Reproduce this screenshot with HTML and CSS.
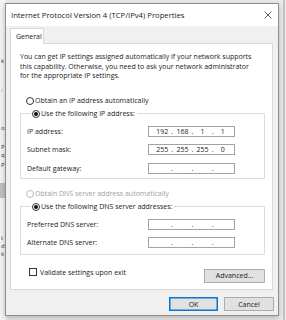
FILE: index.html
```html
<!DOCTYPE html>
<html lang="en">
<head>
    <meta charset="UTF-8">
    <meta name="viewport" content="width=device-width, initial-scale=1.0">
    <title>Internet Protocol Version 4 (TCP/IPv4) Properties</title>
    <link rel="stylesheet" href="styles.css">
</head>
<body>

<div class="desktop">
    <!-- window behind the dialog, only a thin strip shows -->
    <div class="back-window">
        <div class="back-line">k</div>
        <div class="back-line gap-21">:</div>
        <div class="back-line gap-30">o</div>
        <div class="back-line gap-11">P</div>
        <div class="back-line">q</div>
        <div class="back-line gap-2">P</div>
        <div class="back-bar"></div>
        <div class="back-line gap-36">t</div>
        <div class="back-line">d</div>
        <div class="back-line">k</div>
    </div>
    <div class="back-edge"></div>

    <div class="dialog">
        <div class="titlebar">
            <span class="title">Internet Protocol Version 4 (TCP/IPv4) Properties</span>
            <svg class="close" width="8" height="8" viewBox="0 0 8 8">
                <path d="M0.5 0.5 L7.5 7.5 M7.5 0.5 L0.5 7.5" stroke="#333" stroke-width="0.8" fill="none"/>
            </svg>
        </div>

        <div class="dialog-body">
            <div class="tabs">
                <div class="tab">General</div>
            </div>

            <div class="panel">
                <p class="intro">You can get IP settings assigned automatically if your network supports<br>this capability. Otherwise, you need to ask your network administrator<br>for the appropriate IP settings.</p>

                <div class="option first"><span class="radio"></span>Obtain an IP address automatically</div>

                <fieldset class="group ip-group">
                    <legend><span class="radio checked"></span>Use the following IP address:</legend>
                    <div class="row">
                        <span class="label">IP address:</span>
                        <div class="ip"><span>192</span>.<span>168</span>.<span>1</span>.<span>1</span></div>
                    </div>
                    <div class="row">
                        <span class="label">Subnet mask:</span>
                        <div class="ip"><span>255</span>.<span>255</span>.<span>255</span>.<span>0</span></div>
                    </div>
                    <div class="row">
                        <span class="label">Default gateway:</span>
                        <div class="ip"><span></span>.<span></span>.<span></span>.<span></span></div>
                    </div>
                </fieldset>

                <div class="option disabled"><span class="radio"></span>Obtain DNS server address automatically</div>

                <fieldset class="group dns-group">
                    <legend><span class="radio checked"></span>Use the following DNS server addresses:</legend>
                    <div class="row">
                        <span class="label">Preferred DNS server:</span>
                        <div class="ip"><span></span>.<span></span>.<span></span>.<span></span></div>
                    </div>
                    <div class="row">
                        <span class="label">Alternate DNS server:</span>
                        <div class="ip"><span></span>.<span></span>.<span></span>.<span></span></div>
                    </div>
                </fieldset>

                <div class="panel-footer">
                    <div class="check"><span class="box"></span>Validate settings upon exit</div>
                    <div class="btn advanced">Advanced...</div>
                </div>
            </div>

            <div class="buttons">
                <div class="btn default">OK</div>
                <div class="btn">Cancel</div>
            </div>
        </div>
    </div>
</div>

</body>
</html>
```

FILE: styles.css
```css
/* Basic Reset */
* {
    margin: 0;
    padding: 0;
    box-sizing: border-box;
}
body {
    font-family: "Open Sans", "Noto Sans", sans-serif;
    font-size: 7px;
    color: #1a1a1a;
    background: #ececec;
    width: 286px;
    height: 320px;
    overflow: hidden;
}
/* Desktop */
.desktop {
    position: relative;
    width: 286px;
    height: 320px;
}
.back-window {
    position: absolute;
    left: 0;
    top: 0;
    width: 6px;
    height: 320px;
    background: #f5f5f5;
    padding-top: 57px;
    font-size: 6px;
    color: #333;
}
.back-line {
    height: 8px;
    line-height: 8px;
    padding-left: 1px;
}
.gap-2 { margin-top: 2px; }
.gap-11 { margin-top: 11px; }
.gap-21 { margin-top: 21px; }
.gap-30 { margin-top: 30px; }
.gap-36 { margin-top: 36px; }
.back-bar {
    height: 15px;
    margin-top: 14px;
    background: #c2c2c2;
}
.back-edge {
    position: absolute;
    right: 1px;
    top: 0;
    width: 2px;
    height: 320px;
    background: #c4c4c4;
}
/* Dialog window */
.dialog {
    position: absolute;
    left: 5px;
    top: 3px;
    width: 274px;
    height: 313px;
    border: 1px solid #8e8e8e;
    background: #f0f0f0;
    box-shadow: 0 2px 6px rgba(0, 0, 0, 0.25);
    display: flex;
    flex-direction: column;
}
.titlebar {
    height: 22px;
    background: #fff;
    display: flex;
    align-items: center;
    justify-content: space-between;
    padding: 0 6px 0 5px;
}
.title {
    font-size: 7.7px;
    white-space: nowrap;
}
.close {
    display: block;
}
.dialog-body {
    flex: 1;
    padding: 2px 5px 0 4px;
}
/* Tab */
.tabs {
    display: flex;
}
.tab {
    position: relative;
    z-index: 1;
    width: 34px;
    height: 16px;
    margin-bottom: -1px;
    padding: 3px 0 0 5px;
    background: #fff;
    border: 1px solid #d9d9d9;
    border-bottom: none;
}
.panel {
    height: 247px;
    background: #fff;
    border: 1px solid #d9d9d9;
    padding: 8px 7px 0 9px;
}
.intro {
    line-height: 9.5px;
    white-space: nowrap;
}
/* Radios and groups */
.option {
    display: flex;
    align-items: center;
    height: 10px;
    padding-left: 6px;
}
.option.first {
    margin-top: 15px;
}
.option.disabled {
    margin-top: 10px;
    color: #a0a0a0;
}
.radio {
    width: 8px;
    height: 8px;
    border: 1px solid #333;
    border-radius: 50%;
    background: #fff;
    margin-right: 1px;
    display: flex;
    align-items: center;
    justify-content: center;
    flex-shrink: 0;
}
.disabled .radio {
    border-color: #bcbcbc;
}
.radio.checked::after {
    content: "";
    width: 4px;
    height: 4px;
    border-radius: 50%;
    background: #111;
}
.group {
    border: 1px solid #dcdcdc;
    margin-top: 3px;
    width: 245px;
    padding: 7px 0 4px 6px;
}
.group legend {
    display: flex;
    align-items: center;
    height: 10px;
    margin-left: 4px;
    padding: 0 2px 0 1px;
}
.dns-group {
    padding-bottom: 6px;
}
.row {
    display: flex;
    align-items: center;
    height: 11px;
}
.row + .row {
    margin-top: 7.5px;
}
.dns-group .row + .row {
    margin-top: 7px;
}
.label {
    width: 121px;
}
.ip {
    width: 87px;
    height: 11px;
    border: 1px solid #a2a2a2;
    display: grid;
    grid-template-columns: 1fr auto 1fr auto 1fr auto 1fr;
    align-items: center;
    padding: 0 2px 0 4px;
    line-height: 9px;
}
.ip span {
    text-align: center;
}
/* Footer row of the panel */
.panel-footer {
    display: flex;
    justify-content: space-between;
    align-items: flex-start;
    margin-top: 13px;
    padding-left: 9px;
}
.check {
    display: flex;
    align-items: center;
    height: 9px;
}
.box {
    width: 8px;
    height: 8px;
    border: 1px solid #333;
    background: #fff;
    margin-right: 3px;
}
.btn {
    height: 14px;
    width: 50px;
    background: #e1e1e1;
    border: 1px solid #adadad;
    display: flex;
    align-items: center;
    justify-content: center;
}
.advanced {
    width: 61px;
    margin-top: 1px;
}
.buttons {
    display: flex;
    justify-content: flex-end;
    gap: 6px;
    margin-top: 7px;
    margin-right: -1px;
}
.btn.default {
    width: 49px;
    border-color: #0078d7;
    box-shadow: inset 0 0 0 0.5px #0078d7;
}
```
